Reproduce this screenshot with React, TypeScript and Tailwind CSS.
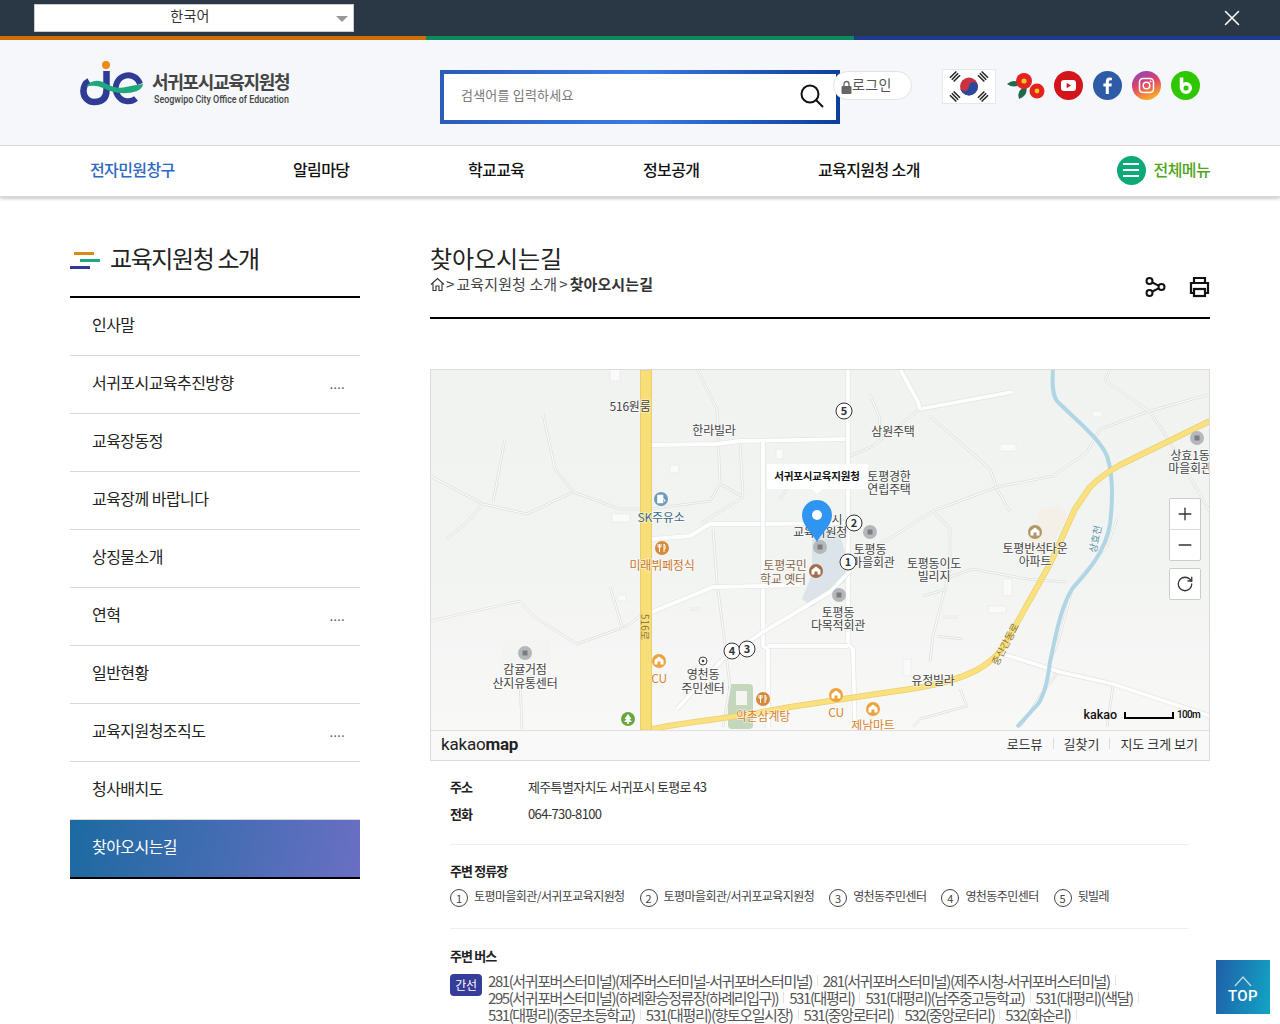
import { X, Plus, Minus, RotateCw } from "lucide-react";

const sideItems: [string, boolean][] = [
  ["인사말", false],
  ["서귀포시교육추진방향", true],
  ["교육장동정", false],
  ["교육장께 바랍니다", false],
  ["상징물소개", false],
  ["연혁", true],
  ["일반현황", false],
  ["교육지원청조직도", true],
  ["청사배치도", false],
];

const stops: [string, string][] = [
  ["1", "토평마을회관/서귀포교육지원청"],
  ["2", "토평마을회관/서귀포교육지원청"],
  ["3", "영천동주민센터"],
  ["4", "영천동주민센터"],
  ["5", "뒷빌레"],
];

const busRows: string[][] = [
  ["281(서귀포버스터미널)(제주버스터미널-서귀포버스터미널)", "281(서귀포버스터미널)(제주시청-서귀포버스터미널)"],
  ["295(서귀포버스터미널)(하례환승정류장(하례리입구))", "531(대평리)", "531(대평리)(남주중고등학교)", "531(대평리)(색달)"],
  ["531(대평리)(중문초등학교)", "531(대평리)(향토오일시장)", "531(중앙로터리)", "532(중앙로터리)", "532(화순리)"],
];

type L = [number, number, string, string?];
const labels: L[] = [
  [630, 406, "516원룸"], [714, 430, "한라빌라"], [893, 431, "삼원주택"],
  [889, 476, "토평경한"], [889, 489, "연립주택"],
  [661, 517, "SK주유소", "#3f6a85"], [662, 565, "미래뷔페정식", "#c9752a"],
  [785, 565, "토평국민", "#86674c"], [783, 579, "학교 옛터", "#86674c"],
  [837, 519, "시"], [820, 532, "교육지원청"],
  [870, 549, "토평동"], [873, 562, "마을회관"],
  [934, 563, "토평동이도"], [934, 576, "빌리지"],
  [1035, 548, "토평반석타운"], [1035, 561, "아파트"],
  [838, 612, "토평동"], [838, 625, "다목적회관"],
  [1190, 455, "상효1동"], [1190, 468, "마을회관"],
  [525, 669, "감귤거점"], [525, 683, "산지유통센터"],
  [703, 674, "영천동"], [703, 688, "주민센터"],
  [659, 678, "CU", "#d9822b"], [836, 712, "CU", "#d9822b"],
  [763, 716, "약촌삼계탕", "#d9822b"], [873, 725, "제남마트", "#d9822b"],
  [933, 680, "유정빌라"],
];

const wide = [
  "652,446 717,445 740,442 850,440",
  "920,410 1012,393",
  "652,540 690,537 710,525 763,525 850,524",
  "763,443 763,647 768,650 768,730",
  "848,370 848,645 853,650 855,730",
  "652,613 713,588 763,587 800,586",
  "677,710 723,660 763,633 830,593 850,572",
  "768,647 848,647",
  "900,370 918,403 920,410",
  "1003,655 1060,673 1113,685 1210,717",
];
const thin = [
  "430,477 483,505 527,515 573,493",
  "543,415 555,470 573,493 620,510 650,510",
  "650,510 710,502 720,485 743,498 740,443",
  "697,370 717,410 720,483",
  "483,505 467,523 447,540",
  "505,440 493,503",
  "430,622 520,602 533,617 577,645 627,627 650,610",
  "610,588 623,630",
  "713,530 717,583 723,630 730,687 723,728",
  "743,498 700,525",
  "920,410 873,447 850,457",
  "930,417 990,470 997,490 1010,513",
  "933,512 997,488 1053,477 1087,453 1100,430 1147,413 1210,395",
  "933,512 900,533 877,547",
  "933,512 950,530 950,570 933,637 930,663",
  "950,578 973,570 1027,580 1067,583",
  "923,597 947,590",
  "943,618 958,618",
  "937,637 963,640",
  "1113,687 1107,728",
  "1058,673 1043,693 1020,728",
  "1117,520 1107,547 1073,587 1060,637 1050,663",
  "1150,413 1170,443 1210,513",
  "1110,370 1105,382 1150,413",
  "960,690 967,707 920,720 913,728",
  "520,680 522,730",
  "780,500 800,470",
  "870,395 880,420 878,440",
  "700,610 690,610",
];

const buildings: [number, number, number, number][] = [
  [610, 370, 10, 12], [670, 466, 9, 8], [612, 515, 18, 8], [618, 596, 8, 6], [776, 450, 7, 10],
  [1003, 580, 9, 17], [988, 607, 18, 7], [903, 660, 8, 17], [1000, 445, 16, 7], [1092, 412, 10, 6],
];

const yellowRoad = "M652 730 C690 722 730 720 790 708 L890 693 C930 688 970 680 990 662 Q1000 655 1008 640 L1050 565 L1075 510 L1090 488 Q1102 476 1120 466 L1210 422";
const river = "M1053 370 C1052 385 1052 400 1060 405 C1075 420 1100 440 1107 457 C1113 475 1113 500 1110 525 C1105 555 1085 575 1072 590 C1060 610 1055 640 1050 663 C1048 680 1045 695 1038 705 L1017 728";

function Poi({ x, y, c, k }: { x: number; y: number; c: string; k: "food" | "house" | "pump" | "tree" }) {
  return (
    <g transform={`translate(${x} ${y})`}>
      <circle r="7" fill={c} />
      {k === "food" && <path d="M-2.5 -4 V4 M-4 -4 V-1 H-1 V-4 M2 4 V-4 Q4 -2 3 1 H2" fill="none" stroke="#fff" strokeWidth="1" />}
      {k === "house" && <path d="M0 -4.5 L4.5 -1 V3.5 H-4.5 V-1 Z M-1.5 3.5 V0.5 H1.5 V3.5 Z" fill="#fff" fillRule="evenodd" />}
      {k === "pump" && <path d="M-3.5 -4 H2 V4 H-3.5 Z M2 -1 L4 1 V3" fill="#fff" stroke="#fff" strokeWidth="0.6" />}
      {k === "tree" && <path d="M0 -5 L3.5 0 H1.5 L4 3 H0.8 V5 H-0.8 V3 H-4 L-1.5 0 H-3.5 Z" fill="#fff" />}
    </g>
  );
}

function MapCanvas() {
  return (
    <svg viewBox="0 0 778 360" className="block w-full h-[360px]" fontFamily="'Noto Sans CJK KR', sans-serif">
      <defs>
        <linearGradient id="mapbg" x1="0" y1="0" x2="0" y2="1">
          <stop offset="0" stopColor="#f0f3f0" />
          <stop offset="0.55" stopColor="#f2f4f2" />
          <stop offset="1" stopColor="#f8f8f7" />
        </linearGradient>
      </defs>
      <g transform="translate(-431,-371)">
        <rect x="431" y="371" width="778" height="360" fill="url(#mapbg)" />
        <rect x="728" y="685" width="25" height="45" fill="#c4d6bc" rx="4" />
        <rect x="736" y="692" width="11" height="14" fill="#f4f5f0" />
        <path d="M812 537 Q825 530 840 535 L849 570 L845 582 L812 608 L802 600 L812 575 Z" fill="#dbe4e8" />
        <path d="M1040 510 L1058 508 L1068 516 L1050 550 L1032 566 L1022 556 Z" fill="#f4efe7" />
        <path d="M504 640 L550 640 L551 668 L500 668 Z" fill="#f4f5f3" />
        {buildings.map(([x, y, w, h]) => (
          <rect key={`${x}${y}`} x={x} y={y} width={w} height={h} fill="#fafafa" stroke="#e6e8e6" strokeWidth="0.6" />
        ))}
        {thin.map((p) => (
          <g key={p} strokeLinejoin="round">
            <polyline points={p} fill="none" stroke="#dcdfdc" strokeWidth="2.6" />
            <polyline points={p} fill="none" stroke="#fbfbfb" strokeWidth="1.2" />
          </g>
        ))}
        {wide.map((p) => (
          <g key={p} strokeLinejoin="round">
            <polyline points={p} fill="none" stroke="#e0e3e0" strokeWidth="5" />
            <polyline points={p} fill="none" stroke="#fefefe" strokeWidth="3.8" />
          </g>
        ))}
        <path d={river} fill="none" stroke="#b0d6e6" strokeWidth="4" />
        <path d={yellowRoad} fill="none" stroke="#e8cf6e" strokeWidth="6" />
        <path d={yellowRoad} fill="none" stroke="#fbe07f" strokeWidth="4.6" />
        <rect x="640.5" y="371" width="11" height="360" fill="#f9dd79" stroke="#e8cf6e" strokeWidth="1" />
        <g fontSize="10" textAnchor="middle" fill="#8a7a3a">
          <text x="645" y="632" transform="rotate(90 645 628)">516로</text>
          <text x="1005" y="649" transform="rotate(-62 1005 645)">중산간동로</text>
          <text x="1095" y="544" fill="#5c94ad" transform="rotate(-78 1095 540)">상효천</text>
        </g>
        {([[1197, 439], [870, 533], [839, 596], [525, 654], [820, 548]] as number[][]).map(([x, y]) => (
          <g key={x}>
            <circle cx={x} cy={y} r="7" fill="#b4b8ba" />
            <rect x={x - 2.5} y={y - 2.5} width="5" height="5" fill="#787e82" />
          </g>
        ))}
        <Poi x={662} y={549} c="#d58a3c" k="food" />
        <Poi x={763} y={700} c="#d58a3c" k="food" />
        <Poi x={659} y={662} c="#eda23d" k="house" />
        <Poi x={836} y={696} c="#eda23d" k="house" />
        <Poi x={873} y={710} c="#eda23d" k="house" />
        <Poi x={816} y={572} c="#a26d4c" k="house" />
        <Poi x={1035} y={533} c="#b39667" k="house" />
        <Poi x={661} y={500} c="#6e9bb8" k="pump" />
        <Poi x={628} y={720} c="#69a63f" k="tree" />
        <circle cx="703" cy="662" r="4" fill="#fff" stroke="#444" />
        <circle cx="703" cy="662" r="1.3" fill="#444" />
        <g fontSize="12" textAnchor="middle" fill="#444" stroke="#fff" strokeOpacity="0.6" strokeWidth="1.6" style={{ paintOrder: "stroke" }} letterSpacing="-0.2">
          {labels.map(([x, y, t, c]) => (
            <text key={`${x}${t}`} x={x} y={y + 6} fill={c ?? "#444"}>
              {t}
            </text>
          ))}
        </g>
        {([[844, 412, "5"], [854, 524, "2"], [848, 563, "1"], [732, 652, "4"], [747, 650, "3"]] as [number, number, string][]).map(([x, y, t]) => (
          <g key={t}>
            <circle cx={x} cy={y} r="8" fill="#fff" stroke="#333" strokeWidth="1" />
            <text x={x} y={y + 4} fontSize="11" fontWeight="700" textAnchor="middle" fill="#333">
              {t}
            </text>
          </g>
        ))}
        <path d="M817 543 C812 533 802 527 802 516 A15 15 0 0 1 832 516 C832 527 822 533 817 543 Z" fill="#2f95f0" />
        <circle cx="817" cy="516" r="5" fill="#fff" />
      </g>
    </svg>
  );
}

function Logo() {
  return (
    <div className="flex items-start">
      <svg width="64" height="46" viewBox="0 0 64 46" className="block">
        <circle cx="26" cy="5" r="4" fill="#ee8a12" />
        <path d="M26.5 11 V30 Q26.5 42 14 42 A10.5 10.5 0 0 1 3.5 31 Q3.5 24 9 21" fill="none" stroke="#2f3b94" strokeWidth="6.5" />
        <path d="M60 24 A12.5 13 0 1 0 56 38.5" fill="none" stroke="#2f3b94" strokeWidth="6" />
        <path d="M6 27 Q12 18 23 22 Q36 30 46 27 Q55 25 63 24 Q62 32 47 33 Q34 34 23 28 Q14 24 6 27 Z" fill="#1fa77d" />
      </svg>
      <div className="ml-[8px] mt-[10px] text-[#444]">
        <div className="text-[18px] leading-[22px] font-bold tracking-[-1.3px] whitespace-nowrap">서귀포시교육지원청</div>
        <div className="text-[11px] leading-[12px] mt-[2px] ml-[2px] font-['Roboto',sans-serif] font-medium scale-x-[0.81] origin-left whitespace-nowrap">
          Seogwipo City Office of Education
        </div>
      </div>
    </div>
  );
}

function Flag() {
  const corners: [number, number, number][] = [
    [-14, -10, -45],
    [14, -10, 45],
    [-14, 10, 45],
    [14, 10, -45],
  ];
  return (
    <div className="w-[54px] h-[35px] bg-white border border-[#e8e8e8] flex items-center justify-center">
      <svg width="52" height="33" viewBox="-26 -16.5 52 33">
        <circle r="9" fill="#c8333f" />
        <path d="M-9 0 A4.5 4.5 0 0 0 0 0 A4.5 4.5 0 0 1 9 0 A9 9 0 0 1 -9 0 Z" fill="#274a9c" />
        {corners.map(([x, y, r]) => (
          <g key={`${x}${y}`} stroke="#222" strokeWidth="1.5" transform={`translate(${x} ${y}) rotate(${r})`}>
            <line x1="-4.5" x2="4.5" y1="-2.6" y2="-2.6" />
            <line x1="-4.5" x2="4.5" y1="0" y2="0" />
            <line x1="-4.5" x2="4.5" y1="2.6" y2="2.6" />
          </g>
        ))}
      </svg>
    </div>
  );
}

function Flower() {
  return (
    <svg width="40" height="30" viewBox="0 0 40 30">
      <path d="M2 14 Q9 8 16 14 Q9 19 2 14 Z" fill="#1d6b4a" />
      <path d="M14 29 Q11 20 21 16 Q24 25 14 29 Z" fill="#1d6b4a" />
      <circle cx="19" cy="11" r="8" fill="#e2231f" />
      <circle cx="19" cy="11" r="2.6" fill="#f4c41f" />
      <circle cx="32" cy="21" r="7.5" fill="#e2231f" />
      <circle cx="32" cy="21" r="2.4" fill="#f4c41f" />
    </svg>
  );
}

function Socials() {
  return (
    <div className="flex items-center gap-[10px]">
      <svg width="29" height="29" viewBox="0 0 29 29">
        <circle cx="14.5" cy="14.5" r="14.5" fill="#d4141c" />
        <rect x="7" y="9" width="15" height="11" rx="3" fill="#fff" />
        <path d="M12.7 11.8 L17 14.5 L12.7 17.2 Z" fill="#d4141c" />
      </svg>
      <svg width="29" height="29" viewBox="0 0 29 29">
        <circle cx="14.5" cy="14.5" r="14.5" fill="#2d5ba6" />
        <path d="M15.8 23 V15.5 H18.4 L18.8 12.6 H15.8 V10.8 Q15.8 9.3 17.4 9.3 H18.9 V6.7 Q17.8 6.5 16.6 6.5 Q12.8 6.5 12.8 10.4 V12.6 H10.4 V15.5 H12.8 V23 Z" fill="#fff" />
      </svg>
      <svg width="29" height="29" viewBox="0 0 29 29">
        <defs>
          <linearGradient id="ig" x1="0" y1="0" x2="0.4" y2="1">
            <stop offset="0" stopColor="#7d4bc0" />
            <stop offset="0.5" stopColor="#dc3f73" />
            <stop offset="1" stopColor="#f8a428" />
          </linearGradient>
        </defs>
        <circle cx="14.5" cy="14.5" r="14.5" fill="url(#ig)" />
        <rect x="7.5" y="7.5" width="14" height="14" rx="3.5" fill="none" stroke="#fff" strokeWidth="1.5" />
        <circle cx="14.5" cy="14.5" r="3.3" fill="none" stroke="#fff" strokeWidth="1.5" />
        <circle cx="18.6" cy="10.4" r="0.9" fill="#fff" />
      </svg>
      <svg width="29" height="29" viewBox="0 0 29 29">
        <circle cx="14.5" cy="14.5" r="14.5" fill="#2fc700" />
        <path d="M10.5 6.5 V17.5" stroke="#fff" strokeWidth="3.6" fill="none" />
        <circle cx="15" cy="17" r="4.3" fill="none" stroke="#fff" strokeWidth="3.4" />
      </svg>
    </div>
  );
}

export default function App() {
  return (
    <div className="relative h-[1024px] overflow-hidden bg-white text-[#222] font-['Noto_Sans_CJK_KR','Noto_Sans',sans-serif]">
      {/* top strip */}
      <div className="h-[36px] bg-[#2a3744] flex items-start justify-between pl-[34px] pr-[35px]">
        <div className="mt-[4px] w-[320px] h-[28px] bg-white border border-[#ccc] relative flex justify-center pr-[8px]">
          <span className="text-[14px] leading-[20px] text-[#333] tracking-[0.3px]">한국어</span>
          <span className="absolute right-[5px] top-[11px] border-x-[6px] border-t-[6px] border-x-transparent border-t-[#999]" />
        </div>
        <X className="mt-[5px] text-white" size={26} strokeWidth={1.4} />
      </div>
      <div className="h-[4px] flex">
        <div className="w-[426px] bg-[#cf6f06]" />
        <div className="w-[428px] bg-[#0b8a5b]" />
        <div className="flex-1 bg-[#1e3a8a]" />
      </div>

      {/* header */}
      <div className="h-[105px] bg-[#f5f7fa] flex items-start">
        <div className="ml-[80px] mt-[20px] w-[360px]">
          <Logo />
        </div>
        <div className="mt-[30px] w-[400px] h-[54px] p-[4px] bg-[linear-gradient(90deg,#2a5cb8_0%,#3b7ae4_50%,#0b3f9a_100%)]">
          <div className="h-full bg-white flex items-center justify-between pl-[17px] pr-[11px]">
            <span className="text-[13px] pb-[4px] text-[#777] tracking-[0.2px]">검색어를 입력하세요</span>
            <svg width="26" height="26" viewBox="0 0 26 26" fill="none" stroke="#111" strokeWidth="2" className="mb-[2px]">
              <circle cx="11" cy="11" r="8.5" />
              <path d="M17 17 L24 24" />
            </svg>
          </div>
        </div>
        <div className="mt-[31px] -ml-[7px] relative w-[79px] h-[29px] rounded-full bg-white border border-[#e2e2e2] flex items-center pl-[7px] text-[14px] text-[#555] tracking-[0.4px]">
          <svg width="11" height="14" viewBox="0 0 11 14" className="mt-[2px]">
            <path d="M3 6 V4 A2.5 2.5 0 0 1 8 4 V6" fill="none" stroke="#666" strokeWidth="1.3" />
            <rect x="0.5" y="6" width="10" height="8" rx="1" fill="#666" />
          </svg>
          <span className="pb-[2px]">로그인</span>
        </div>
        <div className="mt-[29px] ml-[30px]">
          <Flag />
        </div>
        <div className="mt-[30px] ml-[9px]">
          <Flower />
        </div>
        <div className="mt-[31px] ml-[9px]">
          <Socials />
        </div>
      </div>

      {/* nav */}
      <div className="relative h-[52px] bg-white border-y border-[#d9d9d9] shadow-[0_2px_3px_rgba(0,0,0,0.2)] flex items-center pl-[90px] pr-[70px] pb-[2px] text-[16px] font-medium tracking-[-0.6px] text-[#111]">
        <span className="w-[203px] pb-[2px] text-[#2d68c4]">전자민원창구</span>
        <span className="w-[175px] pb-[2px]">알림마당</span>
        <span className="w-[175px] pb-[2px]">학교교육</span>
        <span className="w-[175px] pb-[2px]">정보공개</span>
        <span className="pb-[2px]">교육지원청 소개</span>
        <div className="ml-auto flex items-center gap-[8px]">
          <span className="w-[29px] h-[29px] rounded-full bg-[#0fa878] flex flex-col items-center justify-center gap-[4px]">
            <i className="block w-[16px] h-[2px] bg-white" />
            <i className="block w-[16px] h-[2px] bg-white" />
            <i className="block w-[16px] h-[2px] bg-white" />
          </span>
          <span className="pb-[2px] text-[#52a51c]">전체메뉴</span>
        </div>
      </div>

      {/* body */}
      <div className="flex pl-[70px] pt-[40px]">
        {/* sidebar */}
        <aside className="w-[290px] shrink-0">
          <div className="h-[61px] border-b-2 border-black flex items-start">
            <div className="w-[30px] mt-[15px] flex flex-col">
              <i className="block w-[20px] h-[3px] ml-[4px] bg-[#d98a1a]" />
              <i className="block w-[20px] h-[3px] ml-[10px] mt-[4px] bg-[#1fa77d]" />
              <i className="block w-[20px] h-[3px] mt-[4px] bg-[#2f3b94]" />
            </div>
            <h2 className="ml-[10px] text-[24px] leading-[44px] font-normal -mt-[1px] tracking-[-1.4px]">교육지원청 소개</h2>
          </div>
          {sideItems.map(([t, more]) => (
            <div key={t} className="h-[58px] border-b border-[#d8d8d8] flex items-center justify-between pl-[22px] pr-[15px] pb-[6px] text-[16px] tracking-[-0.55px] text-[#222]">
              <span>{t}</span>
              {more && <span className="text-[12px] tracking-[0.5px] text-[#555] mt-[4px]">....</span>}
            </div>
          ))}
          <div className="h-[59px] border-b-2 border-black flex items-center pl-[22px] pb-[6px] text-[16px] tracking-[-0.55px] text-white bg-[linear-gradient(100deg,#1c6aa0_0%,#6a6fc4_100%)]">
            찾아오시는길
          </div>
        </aside>

        {/* main */}
        <main className="ml-[70px] w-[780px] shrink-0">
          <div className="h-[82px] border-b-2 border-black flex justify-between">
            <div>
              <h1 className="text-[24px] leading-[44px] -mt-[1px] font-normal tracking-[-0.1px] text-[#222]">찾아오시는길</h1>
              <div className="flex items-center text-[15px] leading-[22px] -mt-[7px] tracking-[0.1px] text-[#444]">
                <svg width="15" height="15" viewBox="0 0 15 15" fill="none" stroke="#333" strokeWidth="1.1" className="mr-[1px]">
                  <path d="M1 7.5 L7.5 1.5 L14 7.5 M3 6.5 V13.5 H6 V9 H9 V13.5 H12 V6.5" />
                </svg>
                <span>&gt;</span>
                <span className="ml-[2px]">교육지원청 소개</span>
                <span className="ml-[2px]">&gt;</span>
                <b className="ml-[2px] font-bold text-[#333]">찾아오시는길</b>
              </div>
            </div>
            <div className="flex gap-[23px] mt-[39px] mr-0">
              <svg width="21" height="22" viewBox="0 0 21 22" fill="none" stroke="#111" strokeWidth="2">
                <circle cx="4.5" cy="5" r="3" />
                <circle cx="4.5" cy="17" r="3" />
                <circle cx="16.5" cy="11" r="3" />
                <path d="M7.3 6.5 L13.7 9.7 M7.3 15.5 L13.7 12.3" />
              </svg>
              <svg width="21" height="22" viewBox="0 0 21 22" fill="none" stroke="#111" strokeWidth="2.2">
                <path d="M5 7 V2 H16 V7" />
                <path d="M5 17 H2 V7 H19 V17 H16" />
                <rect x="5" y="13" width="11" height="7" />
              </svg>
            </div>
          </div>

          {/* map */}
          <div className="relative mt-[50px] h-[392px] border border-[#dcdcdc] overflow-hidden">
            <MapCanvas />
            <div className="h-[30px] bg-[#f9f9f9] border-t border-[#e0e0e0] flex items-center justify-between pl-[10px] pr-[11px] pb-[4px]">
              <span className="font-['Roboto',sans-serif] text-[17px] leading-none tracking-[-0.2px] text-[#222] mt-[2px]">
                kakao<b className="font-bold">map</b>
              </span>
              <div className="flex items-center text-[13px] tracking-[0px] text-[#333]">
                <span>로드뷰</span>
                <i className="block w-px h-[11px] bg-[#ddd] mx-[10px]" />
                <span>길찾기</span>
                <i className="block w-px h-[11px] bg-[#ddd] mx-[10px]" />
                <span>지도 크게 보기</span>
              </div>
            </div>
            <div className="absolute left-[336px] top-[94px] h-[25px] w-[101px] bg-white flex items-center justify-center pr-[1px] pb-[2px] text-[10.5px] font-bold tracking-[-0.15px] text-[#111] whitespace-nowrap">
              서귀포시교육지원청
              <span className="absolute left-[45px] top-[25px] border-x-[5px] border-t-[5px] border-x-transparent border-t-white" />
            </div>
            <div className="absolute right-[8px] top-[128px] w-[32px] h-[63px] bg-white border border-[#ccc] rounded-[2px] flex flex-col text-[#333]">
              <span className="h-[31px] border-b border-[#ddd] flex items-center justify-center"><Plus size={20} strokeWidth={1.6} /></span>
              <span className="flex-1 flex items-center justify-center"><Minus size={20} strokeWidth={1.6} /></span>
            </div>
            <div className="absolute right-[8px] top-[198px] w-[32px] h-[32px] bg-white border border-[#ccc] rounded-[2px] flex items-center justify-center text-[#333]">
              <RotateCw size={18} strokeWidth={1.7} />
            </div>
            <div className="absolute right-[9px] top-[339px] flex items-center text-[#111]">
              <span className="font-['Roboto',sans-serif] font-medium text-[12.5px] leading-none mr-[7px]">kakao</span>
              <span className="block w-[50px] h-[7px] border-x-2 border-b-2 border-black" />
              <span className="font-['Roboto',sans-serif] font-medium text-[10px] tracking-[-0.7px] leading-none ml-[3px]">100m</span>
            </div>
          </div>

          {/* info */}
          <div className="px-[20px] tracking-[-0.65px]">
            <div className="flex h-[27px] mt-[12px] items-center text-[13px] text-[#333]">
              <b className="w-[78px] font-bold text-[#222] tracking-[-0.9px]">주소</b>
              <span>제주특별자치도 서귀포시 토평로 43</span>
            </div>
            <div className="flex h-[27px] items-center text-[13px] text-[#333]">
              <b className="w-[78px] font-bold text-[#222] tracking-[-0.9px]">전화</b>
              <span>064-730-8100</span>
            </div>
            <div className="mt-[17px] w-[738px] border-t border-[#eee]" />
            <h3 className="mt-[16px] text-[13px] leading-[20px] font-bold text-[#222] tracking-[-0.9px]">주변 정류장</h3>
            <div className="mt-[7px] flex gap-[15px] text-[12px] text-[#444] tracking-[-0.58px]">
              {stops.map(([n, t]) => (
                <div key={n} className="flex items-start gap-[6px]">
                  <span className="mt-[1px] w-[18px] h-[18px] rounded-full border border-[#444] flex items-center justify-center text-[11px] tracking-normal leading-none">{n}</span>
                  <span className="leading-[16px]">{t}</span>
                </div>
              ))}
            </div>
            <div className="mt-[21px] w-[738px] border-t border-[#eee]" />
            <h3 className="mt-[17px] text-[13px] leading-[20px] font-bold text-[#222] tracking-[-0.9px]">주변 버스</h3>
            <div className="mt-[6px] flex items-start gap-[6px]">
              <span className="shrink-0 mt-[2px] w-[32px] h-[22px] rounded-[4px] bg-[#353c99] text-white text-[12px] flex items-center justify-center tracking-[-0.3px]">간선</span>
              <div className="text-[15px] leading-[17px] tracking-[-1.42px] text-[#555]">
                {busRows.map((row, i) => (
                  <div key={i} className="flex whitespace-nowrap">
                    {row.map((b) => (
                      <span key={b} className="flex items-center">
                        <span>{b}</span>
                        <i className="block w-px h-[11px] bg-[#e5e5e5] mx-[5px]" />
                      </span>
                    ))}
                  </div>
                ))}
              </div>
            </div>
          </div>
        </main>
      </div>

      {/* top button */}
      <div className="absolute left-[1216px] top-[960px] w-[54px] h-[54px] pt-[6px] bg-[linear-gradient(100deg,#1f5fa8_0%,#12a4c4_100%)] flex flex-col items-center justify-center text-white">
        <svg width="20" height="12" viewBox="0 0 20 12" fill="none" stroke="#fff" strokeWidth="1.3" className="opacity-70">
          <path d="M2 11 L10 2 L18 11" />
        </svg>
        <span className="text-[15px] leading-[18px] font-medium font-['Roboto',sans-serif] tracking-[0.4px]">TOP</span>
      </div>
    </div>
  );
}
